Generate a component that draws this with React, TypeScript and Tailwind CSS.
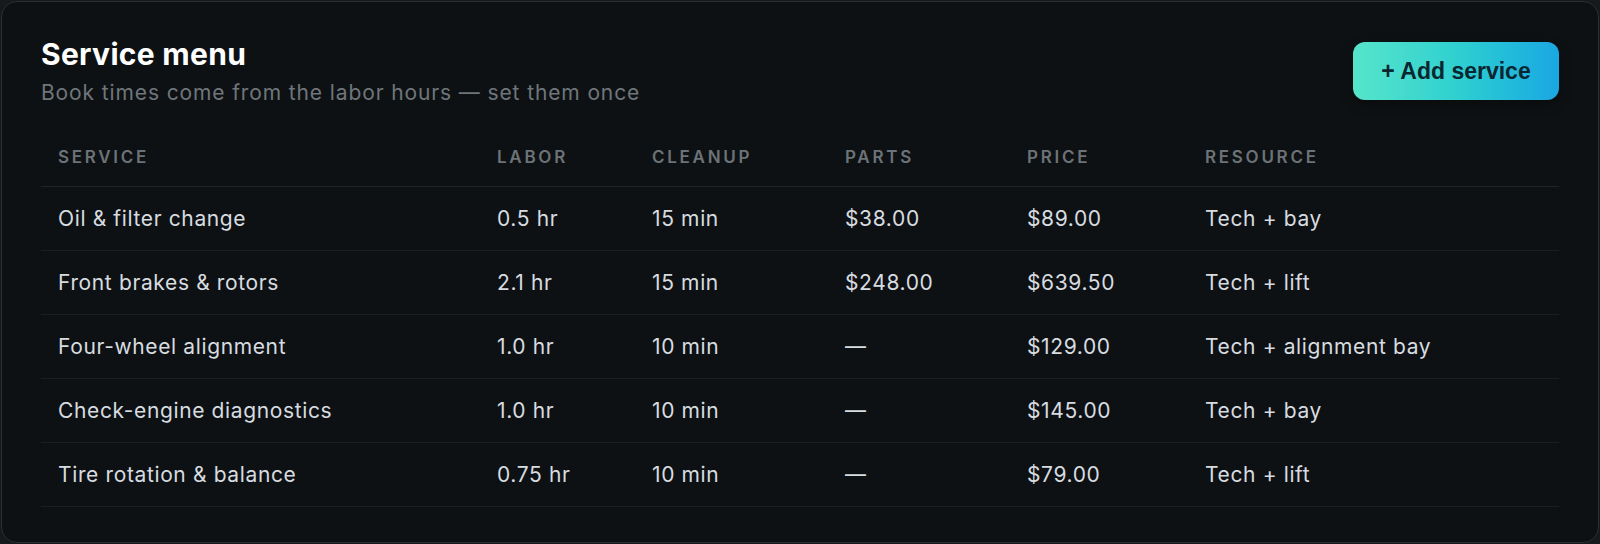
import React from "react";

type Service = {
  name: string;
  labor: string;
  cleanup: string;
  parts: string;
  price: string;
  resource: string;
};

const services: Service[] = [
  { name: "Oil & filter change", labor: "0.5 hr", cleanup: "15 min", parts: "$38.00", price: "$89.00", resource: "Tech + bay" },
  { name: "Front brakes & rotors", labor: "2.1 hr", cleanup: "15 min", parts: "$248.00", price: "$639.50", resource: "Tech + lift" },
  { name: "Four-wheel alignment", labor: "1.0 hr", cleanup: "10 min", parts: "—", price: "$129.00", resource: "Tech + alignment bay" },
  { name: "Check-engine diagnostics", labor: "1.0 hr", cleanup: "10 min", parts: "—", price: "$145.00", resource: "Tech + bay" },
  { name: "Tire rotation & balance", labor: "0.75 hr", cleanup: "10 min", parts: "—", price: "$79.00", resource: "Tech + lift" },
];

const columns = ["Service", "Labor", "Cleanup", "Parts", "Price", "Resource"];

const ServiceMenu: React.FC = () => {
  return (
    <div className="h-[544px] bg-[#17191b] p-px font-['Inter','Noto_Sans',sans-serif]">
      <section className="h-full rounded-2xl border border-[#2a2e31] bg-[#0e1113] px-[39px] pt-[34px]">
        {/* Header */}
        <div className="flex items-start justify-between">
          <div>
            <h1 className="text-[30px] font-bold leading-[36px] tracking-[0.01em] text-white">Service menu</h1>
            <p className="mt-[7px] text-[21px] leading-[28px] tracking-[0.042em] text-[#6f767b]">
              Book times come from the labor hours — set them once
            </p>
          </div>
          <button className="mt-[6px] h-[58px] w-[206px] rounded-xl bg-gradient-to-r from-[#55e5ca] via-[#2fd0d0] to-[#1ba7e2] font-['Liberation_Sans',Arial,sans-serif] text-[23px] font-bold text-[#0a2630] shadow-[0_4px_12px_rgba(0,0,0,0.35)]">
            + Add service
          </button>
        </div>

        {/* Table */}
        <div className="mt-[18px]">
          <div className="grid grid-cols-[439px_155px_193px_182px_178px_1fr] border-b border-[#202427]">
            {columns.map((col) => (
              <div
                key={col}
                className="px-[17px] pb-[19px] pt-[22px] text-[17px] font-semibold uppercase leading-5 tracking-[0.16em] text-[#6c7378]"
              >
                {col}
              </div>
            ))}
          </div>
          {services.map((s) => (
            <div
              key={s.name}
              className="grid h-[64px] grid-cols-[439px_155px_193px_182px_178px_1fr] items-center border-b border-[#1a1e21] text-[21px] tracking-[0.03em] text-[#d7dce0]"
            >
              <div className="px-[17px]">{s.name}</div>
              <div className="px-[17px]">{s.labor}</div>
              <div className="px-[17px]">{s.cleanup}</div>
              <div className="px-[17px]">{s.parts}</div>
              <div className="px-[17px]">{s.price}</div>
              <div className="px-[17px]">{s.resource}</div>
            </div>
          ))}
        </div>
      </section>
    </div>
  );
};

export default function App() {
  return <ServiceMenu />;
}
